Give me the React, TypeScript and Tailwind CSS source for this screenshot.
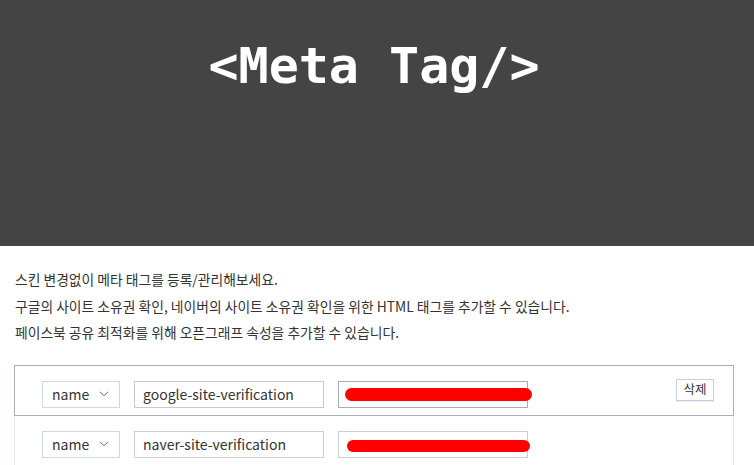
import React from 'react';

const KR = "font-['Noto_Sans_CJK_KR','Noto_Sans',sans-serif]";

interface MetaRow {
    attr: string;
    name: string;
    active: boolean;
    bar: string;
}

const rows: MetaRow[] = [
    { attr: 'name', name: 'google-site-verification', active: true, bar: 'left-[6px] top-[6px] w-[187px] h-[13px]' },
    { attr: 'name', name: 'naver-site-verification', active: false, bar: 'left-[8px] top-[8px] w-[183px] h-[12px]' },
];

const Chevron = () => (
    <svg width="10" height="6" viewBox="0 0 10 6" fill="none" stroke="#666" strokeWidth="1">
        <path d="M1 0.8 L5 4.8 L9 0.8" />
    </svg>
);

const Row: React.FC<{ row: MetaRow }> = ({ row }) => (
    <div
        className={`flex items-start pl-[27px] pr-[19px] pt-[15px] pb-[7px] border-b border-x ${
            row.active ? 'border-[#a9b0ba]' : 'border-[#e3e6ec]'
        }`}
    >
        <div className="flex items-center justify-between w-[78px] h-[27px] border border-[#d2d6dd] bg-white pl-[9px] pr-[10px] text-[14px] text-[#333]">
            <span>{row.attr}</span>
            <Chevron />
        </div>
        <div
            className={`ml-[14px] w-[190px] h-[27px] border ${
                row.active ? 'border-[#c6cbd3]' : 'border-[#c9d0d8]'
            } px-[8px] flex items-center text-[14px] text-[#333]`}
        >
            {row.name}
        </div>
        <div
            className={`relative ml-[14px] w-[190px] h-[27px] border ${
                row.active ? 'border-[#a5acb7]' : 'border-[#c6ced7]'
            } bg-white`}
        >
            <div className={`absolute ${row.bar} rounded-full bg-[#ff0000]`} />
        </div>
        {row.active && (
            <button className="ml-auto -mt-[2px] w-[38px] h-[22px] border border-[#c9d0d9] shadow-[0_1px_1px_rgba(0,0,0,0.08)] bg-white text-[12.5px] text-[#333] leading-none">
                삭제
            </button>
        )}
    </div>
);

export default function App() {
    return (
        <div className={`w-[754px] h-[465px] overflow-hidden bg-white ${KR}`}>
            <div className="h-[246px] bg-[#444444] flex justify-center pt-[36px]">
                <h1 className="font-['DejaVu_Sans_Mono',monospace] font-bold text-[50px] leading-[60px] text-white pr-[6px]">
                    &lt;Meta Tag/&gt;
                </h1>
            </div>
            <div className="pt-[20px] pl-[15px] text-[13.8px] leading-[26.5px] text-[#333]">
                <p>스킨 변경없이 메타 태그를 등록/관리해보세요.</p>
                <p>구글의 사이트 소유권 확인, 네이버의 사이트 소유권 확인을 위한 HTML 태그를 추가할 수 있습니다.</p>
                <p>페이스북 공유 최적화를 위해 오픈그래프 속성을 추가할 수 있습니다.</p>
            </div>
            <div className="ml-[14px] mt-[19px] w-[720px] border-t border-[#a9b0ba]">
                {rows.map((row) => (
                    <Row key={row.name} row={row} />
                ))}
            </div>
        </div>
    );
}
